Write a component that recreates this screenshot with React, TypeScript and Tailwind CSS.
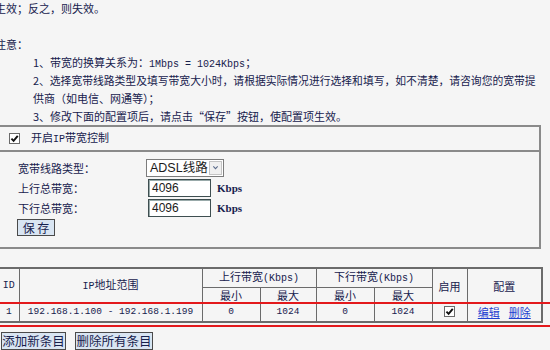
import React from 'react';

const cjk = "font-['Noto_Sans_CJK_SC',sans-serif]";
const mono = "font-['Liberation_Mono','Noto_Sans_CJK_SC',monospace]";

const Check = () => (
  <span className="inline-flex h-[11px] w-[11px] items-center justify-center border border-[#6a6a6a] bg-white align-middle">
    <svg viewBox="0 0 10 10" className="h-[9px] w-[9px]">
      <path d="M1.6 5.2 L4 7.7 L8.6 2" fill="none" stroke="#111" strokeWidth="2.1" />
    </svg>
  </span>
);

const TextInput = ({ value }: { value: string }) => (
  <div className="flex h-[18px] w-[63px] items-center border border-[#3e4e50] bg-white pl-[3px] font-['Liberation_Sans',sans-serif] text-[12px] text-[#1a1a1a] shadow-[inset_1px_1px_0_#9aa]">
    {value}
  </div>
);

const cell = 'border border-[#6b6b6b] p-0 align-middle font-normal';

const App = () => {
  return (
    <div className={`h-[350px] w-[550px] overflow-hidden bg-[#f5f5f5] text-[11px] leading-[18px] text-[#17214d] ${cjk}`}>
      {/* notes */}
      <div className="-mt-[1px] ml-[-5px] whitespace-nowrap">
        <div className="h-[18px]">生效；反之，则失效。</div>
        <div className="h-[18px]" />
        <div className="h-[18px]">注意：</div>
        <div className="pl-[38px]">
          <div className="h-[18px]">
            1、带宽的换算关系为：<span className={`${mono} text-[10px]`}>1Mbps = 1024Kbps</span>；
          </div>
          <div className="h-[18px] text-[10.8px]">2、选择宽带线路类型及填写带宽大小时，请根据实际情况进行选择和填写，如不清楚，请咨询您的宽带提</div>
          <div className="h-[18px]">供商（如电信、网通等）；</div>
          <div className="h-[18px]">3、修改下面的配置项后，请点击“保存”按钮，使配置项生效。</div>
        </div>
      </div>

      {/* settings box */}
      <div className="ml-[-2px] w-[543px] border-2 border-[#8a8a8a]">
        <div className="flex h-[25px] items-center gap-[11px] border-b-2 border-[#8a8a8a] pl-[9px]">
          <Check />
          <span>开启<span className={`${mono} text-[10px]`}>IP</span>带宽控制</span>
        </div>
        <div className="flex flex-col gap-[1px] pb-[10px] pl-[18px] pt-[6px]">
          <div className="flex h-[19px] items-center">
            <span className="w-[128px]">宽带线路类型：</span>
            <div className="flex h-[18px] w-[78px] items-center justify-between border border-[#7c7c7c] bg-white pl-[3px] pr-[1px] font-['Liberation_Sans','Noto_Sans_CJK_SC',sans-serif] text-[12.5px] text-[#1a1a1a]">
              <span>ADSL线路</span>
              <span className="flex h-[14px] w-[13px] items-center justify-center border border-[#c4c4c4] bg-[#f0f0f0]">
                <svg viewBox="0 0 8 8" className="h-[7px] w-[7px]">
                  <path d="M1.5 2.8 L4 5.3 L6.5 2.8" fill="none" stroke="#5a6a8a" strokeWidth="1.2" />
                </svg>
              </span>
            </div>
          </div>
          <div className="flex h-[19px] items-center">
            <span className="w-[130px]">上行总带宽：</span>
            <TextInput value="4096" />
            <span className="ml-[6px] font-['Liberation_Serif',serif] text-[11px] font-bold">Kbps</span>
          </div>
          <div className="flex h-[19px] items-center">
            <span className="w-[130px]">下行总带宽：</span>
            <TextInput value="4096" />
            <span className="ml-[6px] font-['Liberation_Serif',serif] text-[11px] font-bold">Kbps</span>
          </div>
          <div className="flex h-[19px] items-center">
            <button className="ml-[-1px] flex h-[17px] w-[38px] items-center justify-center border border-[#4a4a4a] bg-[#d9e5f2] text-[12px] text-[#17214d]">
              保 存
            </button>
          </div>
        </div>
      </div>

      {/* rules table */}
      <table className="ml-[-3px] mt-[18px] w-[544px] table-fixed border-collapse border-2 border-[#6b6b6b] text-center leading-[12px]">
        <colgroup>
          <col className="w-[21px]" />
          <col className="w-[183px]" />
          <col className="w-[58px]" />
          <col className="w-[56px]" />
          <col className="w-[58px]" />
          <col className="w-[58px]" />
          <col className="w-[35px]" />
          <col className="w-[75px]" />
        </colgroup>
        <thead>
          <tr className="h-[19px]">
            <th rowSpan={2} className={`${cell} ${mono} text-[10px]`}>ID</th>
            <th rowSpan={2} className={cell}>
              <span className={`${mono} text-[10px]`}>IP</span>地址范围
            </th>
            <th colSpan={2} className={cell}>
              上行带宽<span className={`${mono} text-[10px]`}>(Kbps)</span>
            </th>
            <th colSpan={2} className={cell}>
              下行带宽<span className={`${mono} text-[10px]`}>(Kbps)</span>
            </th>
            <th rowSpan={2} className={cell}>启用</th>
            <th rowSpan={2} className={cell}>配置</th>
          </tr>
          <tr className="h-[16px]">
            <th className={cell}>最小</th>
            <th className={cell}>最大</th>
            <th className={cell}>最小</th>
            <th className={cell}>最大</th>
          </tr>
        </thead>
        <tbody className={`${mono} text-[9.5px]`}>
          <tr className="h-[19px]">
            <td className={`${cell} relative`}>
              1
              {/* red annotation */}
              <div className="absolute left-[-5px] top-[-2px] h-[2px] w-[570px] bg-[#e3191c]" />
              <div className="absolute bottom-[-6px] left-[-5px] h-[2px] w-[570px] bg-[#e3191c]" />
            </td>
            <td className={cell}>192.168.1.100 - 192.168.1.199</td>
            <td className={cell}>0</td>
            <td className={cell}>1024</td>
            <td className={cell}>0</td>
            <td className={cell}>1024</td>
            <td className={cell}>
              <Check />
            </td>
            <td className={`${cell} ${cjk} text-[11px]`}>
              <a className="text-[#1f3fd0] underline">编辑</a>
              <a className="ml-[9px] text-[#1f3fd0] underline">删除</a>
            </td>
          </tr>
        </tbody>
      </table>

      <div className="mt-[9px] flex gap-[9px] pl-[1px]">
        <button className="flex h-[18px] w-[65px] items-center justify-center border border-[#4a4a4a] bg-[#d9e5f2] text-[12.5px] text-[#17214d]">
          添加新条目
        </button>
        <button className="flex h-[18px] w-[78px] items-center justify-center border border-[#4a4a4a] bg-[#d9e5f2] text-[12.5px] text-[#17214d]">
          删除所有条目
        </button>
      </div>
    </div>
  );
};

export default App;
